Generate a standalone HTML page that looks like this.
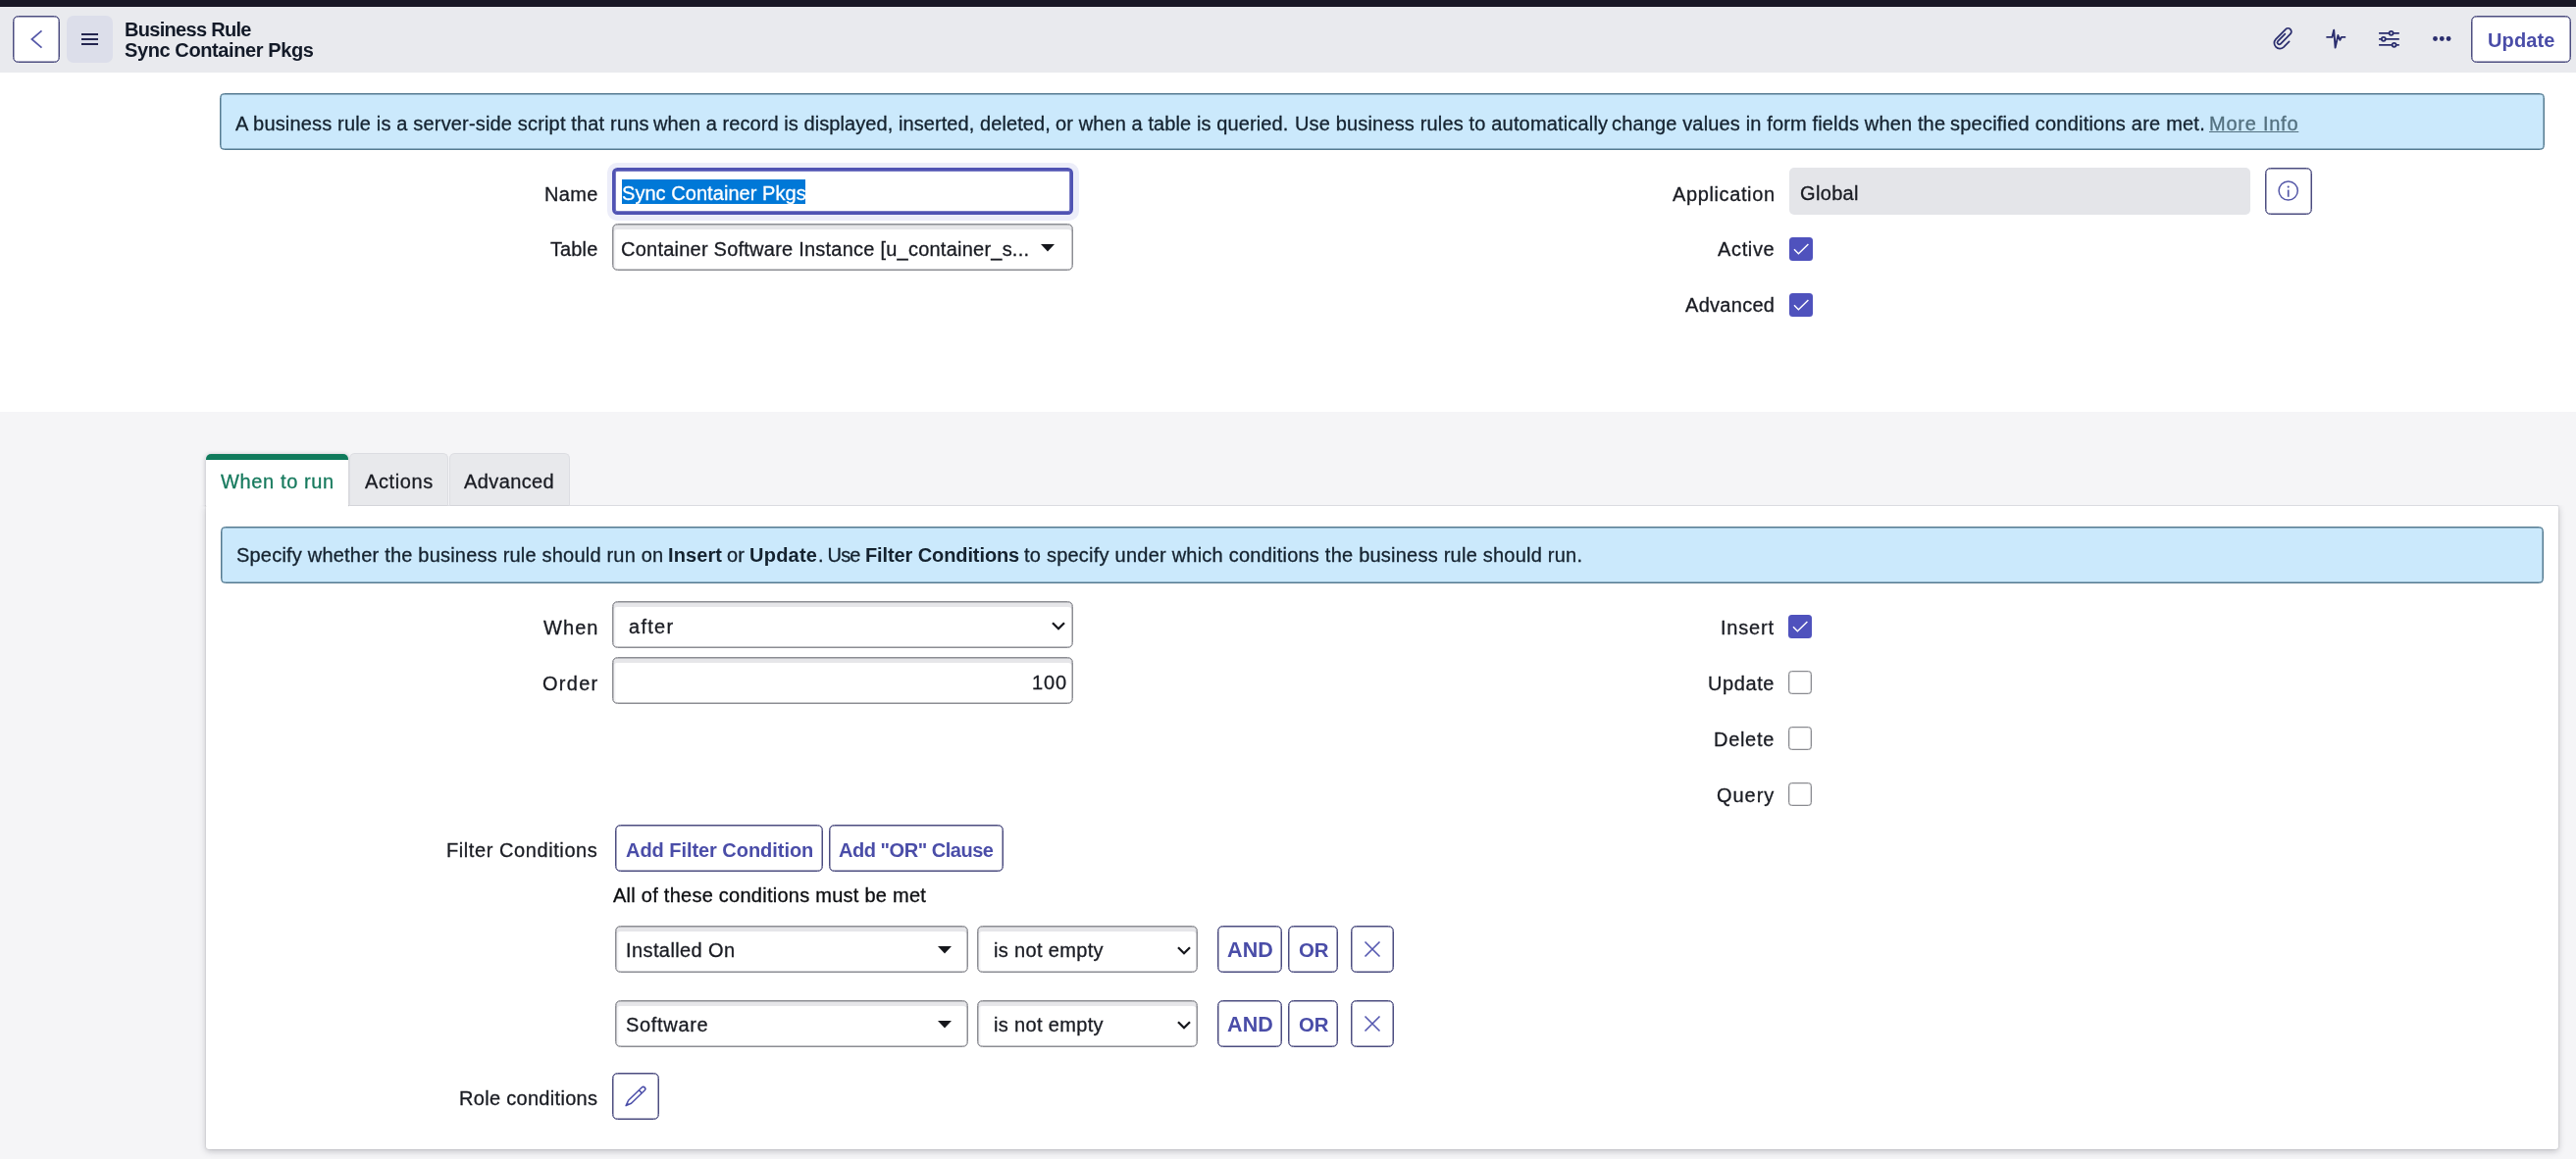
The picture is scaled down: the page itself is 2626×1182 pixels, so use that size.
<!DOCTYPE html>
<html lang="en"><head><meta charset="utf-8"><title>Business Rule</title>
<style>
*{box-sizing:border-box;margin:0;padding:0}
html,body{width:2626px;height:1182px;overflow:hidden;background:#fff}
body{font-family:"Liberation Sans",sans-serif;color:#191b22;font-size:20px;position:relative}
.a{position:absolute}
.t{position:absolute;white-space:nowrap;line-height:24px;height:24px;will-change:transform;-webkit-text-stroke:0.3px}
.b{font-weight:bold;-webkit-text-stroke:0}
.btn{position:absolute;border:1px solid #4c4d80;border-radius:5.5px;background:#fff;box-shadow:inset 0 0 0 .5px #4c4d80}
.info{position:absolute;background:#cbe9fc;border:1px solid #557a90;border-radius:4.5px;box-shadow:inset 0 0 0 .5px #557a90}
.inp{position:absolute;border:1px solid #8c8d93;border-radius:5.5px;background:#fff;box-shadow:inset 0 0 0 .5px #8c8d93,inset 0 5.5px 0 -0.5px #e6e6e9,inset 2.5px 0 0 #f4f4f6}
.cb{position:absolute;width:24px;height:24px;border-radius:3.5px}
.on{background:#4f52bd}
.off{background:#fff;border:1px solid #8a8b90;box-shadow:inset 0 0 0 .3px #8a8b90}
</style></head><body>
<div class="a" style="left:0;top:0;width:2626px;height:7px;background:#191826"></div>
<div class="a" style="left:0;top:7px;width:2626px;height:67px;background:#e9eaee"></div>
<div class="a" style="left:0;top:420px;width:2626px;height:762px;background:#f5f5f7"></div>
<div class="btn" style="left:13px;top:16px;width:48px;height:48px"></div>
<svg class="a" style="left:13px;top:16px" width="48" height="48" viewBox="0 0 48 48"><path d="M29.5 15.4 L19.4 24 L29.5 32.6" fill="none" stroke="#5558a8" stroke-width="1.7"/></svg>
<div class="a" style="left:68px;top:16px;width:47px;height:48px;border-radius:7px;background:#dcdeea"></div>
<svg class="a" style="left:68px;top:16px" width="47" height="48" viewBox="0 0 47 48"><path d="M15 19h17M15 24h17M15 29h17" stroke="#23254f" stroke-width="2"/></svg>
<svg class="a" style="left:2315px;top:27px" width="24" height="25" viewBox="0 0 24 25"><path d="M18.6 15.4 L12.91 21.09 A5.7 5.7 0 0 1 4.86 13.04 L15.03 2.87 A3.4 3.4 0 0 1 19.85 7.69 L9.75 17.78 A1.95 1.95 0 0 1 7 15.03 L14.35 7.68" fill="none" stroke="#2b2e6e" stroke-width="1.75" stroke-linecap="round"/></svg>
<svg class="a" style="left:2369px;top:28px" width="24" height="23" viewBox="0 0 24 23"><path d="M2.4 9.9 H8.4 L10.2 2.6 L11.6 20.6 L14.4 8 L16.4 12.8 L17.9 9.9 H22.2" fill="none" stroke="#2b2e6e" stroke-width="1.9" stroke-linejoin="round"/></svg>
<svg class="a" style="left:2423px;top:29px" width="24" height="22" viewBox="0 0 24 22"><g stroke="#2b2e6e" stroke-width="1.8" fill="none"><path d="M2.1 4.85H12.6M16.6 4.85H22.8M2.1 10.85H4.8M8.8 10.85H22.8M2.1 16.85H15.6M19.6 16.85H22.8"/><circle cx="14.6" cy="4.85" r="1.95"/><circle cx="6.8" cy="10.85" r="1.95"/><circle cx="17.6" cy="16.85" r="1.95"/></g></svg>
<svg class="a" style="left:2478px;top:35px" width="24" height="10" viewBox="0 0 24 10"><circle cx="4.5" cy="4.5" r="2.4" fill="#2b2e6e"/><circle cx="11.3" cy="4.5" r="2.4" fill="#2b2e6e"/><circle cx="18.1" cy="4.5" r="2.4" fill="#2b2e6e"/></svg>
<div class="btn" style="left:2519px;top:16px;width:102px;height:48px"></div>
<div class="info" style="left:224px;top:95px;width:2370px;height:58px"></div>
<div class="a" style="left:618.5px;top:165.5px;width:481px;height:59px;border-radius:10px;background:#ecedf9"></div>
<div class="a" style="left:624px;top:171px;width:470px;height:48px;border-radius:5.5px;background:#fff;border:3px solid #5053b3;box-shadow:inset 0 0 0 .75px #5053b3"></div>
<div class="a" style="left:633.75px;top:183px;width:187.25px;height:24.75px;background:#0078d7"></div>
<div class="inp" style="left:624px;top:228px;width:470px;height:47.5px"></div>
<svg class="a" style="left:1061px;top:249px" width="14" height="8" viewBox="0 0 14 8"><path d="M0 0H14L7 7.5Z" fill="#16171c"/></svg>
<div class="a" style="left:1824px;top:171px;width:470px;height:48px;border-radius:5px;background:#e4e5e9"></div>
<div class="btn" style="left:2309px;top:171px;width:48px;height:48px"></div>
<svg class="a" style="left:2321px;top:183px" width="24" height="24" viewBox="0 0 24 24"><circle cx="11.7" cy="11.5" r="9.6" fill="none" stroke="#5558a8" stroke-width="1.5"/><path d="M11.7 10.6v7.2" stroke="#5558a8" stroke-width="1.7"/><circle cx="11.7" cy="7.6" r="1.05" fill="#5558a8"/></svg>
<div class="cb on" style="left:1824px;top:242px"><svg width="24" height="24" viewBox="0 0 24 24" style="display:block"><path d="M5 12.3 L9.4 16.8 L19.4 7" fill="none" stroke="#fff" stroke-width="1.45"/></svg></div>
<div class="cb on" style="left:1824px;top:299px"><svg width="24" height="24" viewBox="0 0 24 24" style="display:block"><path d="M5 12.3 L9.4 16.8 L19.4 7" fill="none" stroke="#fff" stroke-width="1.45"/></svg></div>
<div class="a" style="left:210px;top:515px;width:2398px;height:657px;background:#fff;border-radius:0 3px 3px 3px;box-shadow:0 2px 7px rgba(40,40,55,.26),0 0 2px rgba(40,40,55,.2)"></div>
<div class="a" style="left:200px;top:500px;width:2420px;height:15px;background:#f5f5f7"></div>
<div class="a" style="left:355px;top:515px;width:2253px;height:1.2px;background:#dadbe0"></div>
<div class="a" style="left:356px;top:462px;width:100.5px;height:54px;background:#e8e9ec;border:1.5px solid #dcdde2;border-bottom-color:#d3d4d9;border-radius:5.5px 5.5px 0 0"></div>
<div class="a" style="left:457.5px;top:462px;width:123.5px;height:54px;background:#e8e9ec;border:1.5px solid #dcdde2;border-bottom-color:#d3d4d9;border-radius:5.5px 5.5px 0 0"></div>
<div class="a" style="left:210px;top:463px;width:145px;height:53.5px;background:#fff;border-radius:5px 5px 0 0;box-shadow:0 1px 5px rgba(40,40,55,.32);clip-path:inset(-8px -1px 0 -8px)"></div>
<div class="a" style="left:210px;top:463px;width:145px;height:6px;background:#0f7a5b;border-radius:5px 5px 0 0"></div>
<div class="a" style="left:210.5px;top:514px;width:144.5px;height:6px;background:#fff"></div>
<div class="info" style="left:225px;top:537px;width:2368px;height:57.5px"></div>
<div class="inp" style="left:624px;top:613px;width:470px;height:47.5px"></div>
<svg class="a" style="left:1071px;top:633px" width="16" height="11" viewBox="0 0 16 11"><path d="M2 2.2 L8 8.2 L14 2.2" fill="none" stroke="#16171c" stroke-width="2.3"/></svg>
<div class="inp" style="left:624px;top:670px;width:470px;height:47.5px"></div>
<div class="cb on" style="left:1823px;top:627px"><svg width="24" height="24" viewBox="0 0 24 24" style="display:block"><path d="M5 12.3 L9.4 16.8 L19.4 7" fill="none" stroke="#fff" stroke-width="1.45"/></svg></div>
<div class="cb off" style="left:1823px;top:684px"></div>
<div class="cb off" style="left:1823px;top:741px"></div>
<div class="cb off" style="left:1823px;top:798px"></div>
<div class="btn" style="left:627px;top:841px;width:211.5px;height:48px"></div>
<div class="btn" style="left:845px;top:841px;width:177.5px;height:48px"></div>
<div class="inp" style="left:627px;top:944px;width:359.5px;height:47.5px"></div>
<svg class="a" style="left:955.5px;top:965px" width="14" height="8" viewBox="0 0 14 8"><path d="M0 0H14L7 7.5Z" fill="#16171c"/></svg>
<div class="inp" style="left:996px;top:944px;width:225px;height:47.5px"></div>
<svg class="a" style="left:1199px;top:964px" width="16" height="11" viewBox="0 0 16 11"><path d="M2 2.2 L8 8.2 L14 2.2" fill="none" stroke="#16171c" stroke-width="2.3"/></svg>
<div class="btn" style="left:1241px;top:944px;width:65.5px;height:47.5px"></div>
<div class="btn" style="left:1313px;top:944px;width:51px;height:47.5px"></div>
<div class="btn" style="left:1377px;top:944px;width:44px;height:47.5px"></div>
<svg class="a" style="left:1389px;top:957.5px" width="20" height="20" viewBox="0 0 20 20"><path d="M2.5 2.5 L17.5 17.5 M17.5 2.5 L2.5 17.5" stroke="#5558b0" stroke-width="1.6"/></svg>
<div class="inp" style="left:627px;top:1020.3px;width:359.5px;height:47.5px"></div>
<svg class="a" style="left:955.5px;top:1041px" width="14" height="8" viewBox="0 0 14 8"><path d="M0 0H14L7 7.5Z" fill="#16171c"/></svg>
<div class="inp" style="left:996px;top:1020.3px;width:225px;height:47.5px"></div>
<svg class="a" style="left:1199px;top:1040px" width="16" height="11" viewBox="0 0 16 11"><path d="M2 2.2 L8 8.2 L14 2.2" fill="none" stroke="#16171c" stroke-width="2.3"/></svg>
<div class="btn" style="left:1241px;top:1020.3px;width:65.5px;height:47.5px"></div>
<div class="btn" style="left:1313px;top:1020.3px;width:51px;height:47.5px"></div>
<div class="btn" style="left:1377px;top:1020.3px;width:44px;height:47.5px"></div>
<svg class="a" style="left:1389px;top:1033.8px" width="20" height="20" viewBox="0 0 20 20"><path d="M2.5 2.5 L17.5 17.5 M17.5 2.5 L2.5 17.5" stroke="#5558b0" stroke-width="1.6"/></svg>
<div class="btn" style="left:624px;top:1094px;width:48px;height:48px"></div>
<svg class="a" style="left:636px;top:1106px" width="24" height="24" viewBox="0 0 24 24"><path d="M2.1 21.6 L4.59 16.27 L18.26 3.06 A2.1 2.1 0 0 1 21.18 6.08 L7.51 19.29 Z M15.38 5.84 L18.3 8.86" fill="none" stroke="#4a4da8" stroke-width="1.5" stroke-linejoin="round"/><path d="M2.1 21.6 L3.6 18.6 L5.1 20.1Z" fill="#4a4da8"/></svg>
<div class="t b" id="h1" style="left:126.50px;top:18px;color:#131a28;letter-spacing:-0.702px;">Business Rule</div>
<div class="t b" id="h2" style="left:126.50px;top:39px;color:#131a28;letter-spacing:-0.398px;">Sync Container Pkgs</div>
<div class="t b" id="upd" style="left:2535.80px;top:29px;color:#4a4da8;letter-spacing:0.141px;">Update</div>
<div class="t" id="i1a" style="left:240.00px;top:114px;color:#14222f;letter-spacing:0.166px;">A business rule is a server-side script that runs</div>
<div class="t" id="i1a2" style="left:666.25px;top:114px;color:#14222f;letter-spacing:0.075px;">when a record is displayed, inserted, deleted,</div>
<div class="t" id="i1a3" style="left:1076.25px;top:114px;color:#14222f;letter-spacing:0.102px;">or when a table is queried.</div>
<div class="t" id="i1a4" style="left:1319.50px;top:114px;color:#14222f;letter-spacing:0.162px;">Use business rules to automatically</div>
<div class="t" id="i1a5" style="left:1643.00px;top:114px;color:#14222f;letter-spacing:0.149px;">change values in form fields when the</div>
<div class="t" id="i1a6" style="left:1987.50px;top:114px;color:#14222f;letter-spacing:0.223px;">specified conditions are met.</div>
<div class="t" id="i1b" style="left:2252.00px;top:114px;color:#53707f;text-decoration:underline;text-decoration-thickness:1.2px;text-underline-offset:1px;letter-spacing:0.752px;">More Info</div>
<div class="t" id="lname" style="left:554.50px;top:186px;letter-spacing:0.380px;">Name</div>
<div class="t" id="vname" style="left:633.60px;top:185px;color:#fff;letter-spacing:0.052px;">Sync Container Pkgs</div>
<div class="t" id="ltable" style="left:560.75px;top:242px;letter-spacing:0.109px;">Table</div>
<div class="t" id="vtable" style="left:633.00px;top:242px;letter-spacing:0.232px;">Container Software Instance [u_container_s...</div>
<div class="t" id="lapp" style="left:1704.50px;top:186px;letter-spacing:0.616px;">Application</div>
<div class="t" id="vapp" style="left:1834.50px;top:185px;letter-spacing:0.338px;">Global</div>
<div class="t" id="lact" style="left:1750.75px;top:242px;letter-spacing:0.656px;">Active</div>
<div class="t" id="ladv" style="left:1717.50px;top:299px;letter-spacing:0.290px;">Advanced</div>
<div class="t" id="tab1" style="left:225.00px;top:479px;color:#177a5e;letter-spacing:0.630px;">When to run</div>
<div class="t" id="tab2" style="left:371.50px;top:479px;letter-spacing:0.618px;">Actions</div>
<div class="t" id="tab3" style="left:473.10px;top:479px;letter-spacing:0.390px;">Advanced</div>
<div class="t" id="i2a" style="left:240.75px;top:554px;color:#14222f;letter-spacing:0.205px;">Specify whether the business rule should run on</div>
<div class="t b" id="i2b" style="left:681.00px;top:554px;color:#14222f;letter-spacing:0.106px;">Insert</div>
<div class="t" id="i2c" style="left:741.00px;top:554px;color:#14222f;letter-spacing:0.203px;">or</div>
<div class="t b" id="i2d" style="left:764.00px;top:554px;color:#14222f;letter-spacing:0.241px;">Update</div>
<div class="t" id="i2e" style="left:833.50px;top:554px;color:#14222f;letter-spacing:-0.797px;">. Use</div>
<div class="t b" id="i2f" style="left:882.00px;top:554px;color:#14222f;letter-spacing:-0.103px;">Filter Conditions</div>
<div class="t" id="i2g" style="left:1043.75px;top:554px;color:#14222f;letter-spacing:0.230px;">to specify under which conditions the business rule should run.</div>
<div class="t" id="lwhen" style="left:554.00px;top:628px;letter-spacing:1.083px;">When</div>
<div class="t" id="vwhen" style="left:640.70px;top:627px;letter-spacing:1.292px;">after</div>
<div class="t" id="lorder" style="left:553.30px;top:685px;letter-spacing:1.269px;">Order</div>
<div class="t" id="vorder" style="left:1051.80px;top:684px;letter-spacing:0.913px;">100</div>
<div class="t" id="lins" style="left:1754.20px;top:628px;letter-spacing:0.794px;">Insert</div>
<div class="t" id="lupd" style="left:1740.80px;top:685px;letter-spacing:0.580px;">Update</div>
<div class="t" id="ldel" style="left:1746.90px;top:742px;letter-spacing:0.697px;">Delete</div>
<div class="t" id="lqry" style="left:1749.90px;top:799px;letter-spacing:0.958px;">Query</div>
<div class="t" id="lfc" style="left:455.40px;top:855px;letter-spacing:0.580px;">Filter Conditions</div>
<div class="t b" id="bafc" style="left:637.80px;top:855px;color:#4a4da8;letter-spacing:-0.047px;">Add Filter Condition</div>
<div class="t b" id="baor" style="left:855.10px;top:855px;color:#4a4da8;letter-spacing:-0.468px;">Add "OR" Clause</div>
<div class="t" id="allof" style="left:625.00px;top:901px;color:#0c0d10;letter-spacing:0.257px;">All of these conditions must be met</div>
<div class="t" id="f1a" style="left:638.20px;top:957px;letter-spacing:0.406px;">Installed On</div>
<div class="t" id="f1b" style="left:1013.00px;top:957px;letter-spacing:0.343px;">is not empty</div>
<div class="t b" id="f1and" style="left:1251.00px;top:957px;font-size:21.5px;color:#4a4da8;letter-spacing:0.153px;">AND</div>
<div class="t b" id="f1or" style="left:1323.60px;top:957px;font-size:20.4px;color:#4a4da8;letter-spacing:-0.094px;">OR</div>
<div class="t" id="f2a" style="left:637.80px;top:1033px;letter-spacing:0.680px;">Software</div>
<div class="t" id="f2b" style="left:1013.00px;top:1033px;letter-spacing:0.343px;">is not empty</div>
<div class="t b" id="f2and" style="left:1251.00px;top:1033px;font-size:21.5px;color:#4a4da8;letter-spacing:0.153px;">AND</div>
<div class="t b" id="f2or" style="left:1323.60px;top:1033px;font-size:20.4px;color:#4a4da8;letter-spacing:-0.094px;">OR</div>
<div class="t" id="lrole" style="left:468.10px;top:1108px;letter-spacing:0.304px;">Role conditions</div>
</body></html>
